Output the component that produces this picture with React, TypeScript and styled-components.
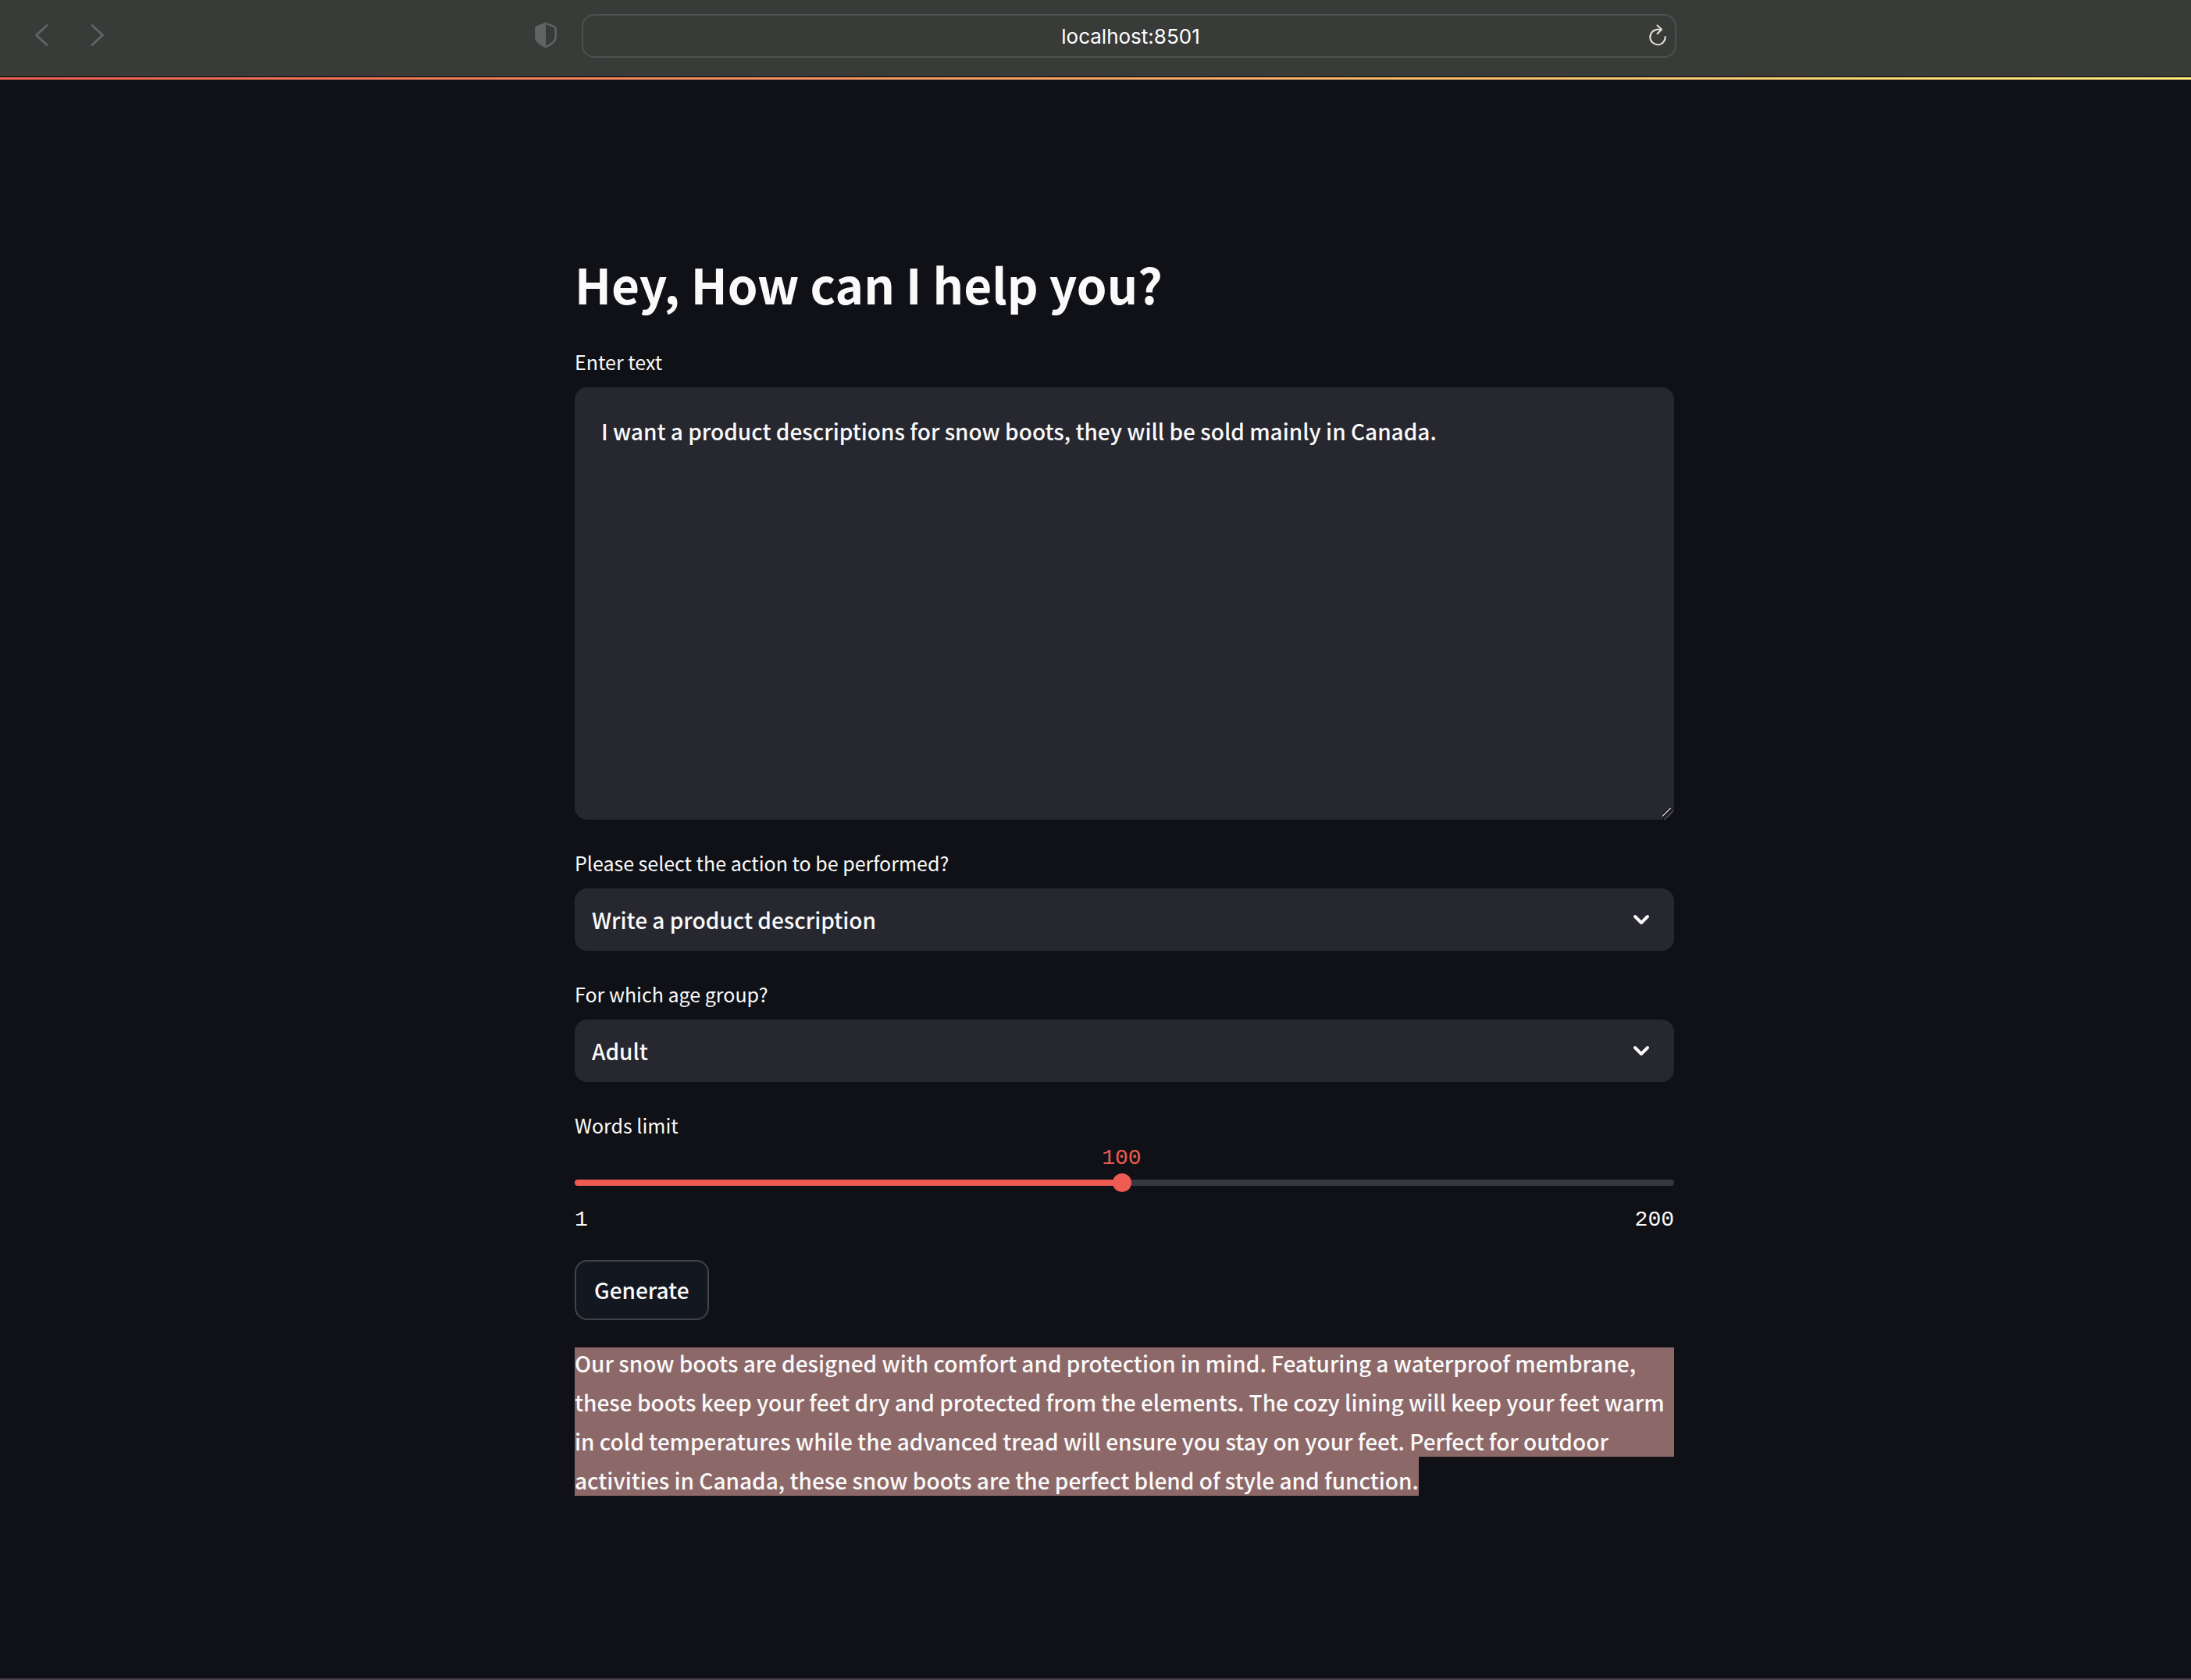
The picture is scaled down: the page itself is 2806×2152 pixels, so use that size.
import { useState } from "react";
import styled, { createGlobalStyle } from "styled-components";

const color = {
  page: "#101116",
  field: "#27272f",
  text: "#fafafa",
  accent: "#ed5b53",
  track: "#363841",
  chrome: "#393b39",
  chromeLine: "#4f5150",
  chromeIcon: "#626365",
  highlight: "#8d6868",
};

const sans = `"Noto Sans CJK SC", "Noto Sans", sans-serif`;
const mono = `"Liberation Mono", monospace`;

const GlobalStyle = createGlobalStyle`
  *, *::before, *::after { box-sizing: border-box; }
  body {
    margin: 0;
    background: ${color.page};
    color: ${color.text};
    font-family: ${sans};
    font-size: 28px;
    font-weight: 500;
  }
`;

const Page = styled.div`
  display: flex;
  flex-direction: column;
  min-height: 100vh;
  border-bottom: 2px solid #48414a;
`;

const Toolbar = styled.header`
  display: grid;
  grid-template-columns: 1fr minmax(0, 1402px) 1fr;
  align-items: center;
  height: 99px;
  padding: 0 0 6px 86px;
  background: ${color.chrome};
  border-bottom: 1px solid #000;
`;

const ToolbarStart = styled.div`
  display: flex;
  align-items: center;
  justify-content: space-between;
  margin-left: -51px;
  padding-right: 28px;
`;

const NavButtons = styled.nav`
  display: flex;
  gap: 36px;
`;

const IconButton = styled.button`
  display: flex;
  align-items: center;
  justify-content: center;
  width: 36px;
  height: 40px;
  padding: 0 0 2px;
  border: 0;
  background: none;
  color: ${color.chromeIcon};
`;

const AddressBar = styled.div`
  display: grid;
  grid-template-columns: 1fr 40px;
  align-items: center;
  height: 56px;
  padding-left: 44px;
  border: 2px solid ${color.chromeLine};
  border-radius: 16px;
`;

const AddressInput = styled.input`
  width: 100%;
  padding: 2px 0 0;
  border: 0;
  outline: 0;
  background: none;
  color: #fff;
  font: 400 26px/32px Inter, sans-serif;
  text-align: center;
`;

const ReloadButton = styled(IconButton)`
  color: #dededd;
`;

const Decoration = styled.div`
  height: 3px;
  background: linear-gradient(90deg, #ee6153, #ffec7c);
`;

const Main = styled.main`
  display: flex;
  justify-content: center;
  padding: 213px 0 96px 74px;
`;

const Form = styled.form`
  display: flex;
  flex-direction: column;
  align-items: stretch;
  flex: 0 1 1408px;
  min-width: 0;
`;

const Title = styled.h1`
  margin: 0 0 34px;
  font-size: 62px;
  font-weight: 700;
  line-height: 96px;
`;

const Field = styled.div`
  display: flex;
  flex-direction: column;
  margin-bottom: 37px;
`;

const Label = styled.label`
  margin-bottom: 15px;
  font-size: 25px;
  font-weight: 400;
  line-height: 36px;
`;

const TextArea = styled.textarea`
  display: block;
  width: 100%;
  height: 554px;
  padding: 32px 34px;
  border: 0;
  outline: 0;
  border-radius: 16px;
  background: ${color.field};
  color: ${color.text};
  font: 500 28px/48px ${sans};
  resize: vertical;

  &::-webkit-resizer {
    background: linear-gradient(
      135deg,
      transparent 24%,
      #101116 24% 31%,
      #c4c4c6 31% 38%,
      transparent 38% 48%,
      #101116 48% 55%,
      #77777c 55% 60%,
      transparent 60%
    );
  }
`;

const SelectShell = styled.div`
  display: grid;
  align-items: center;
  border-radius: 16px;
  background: ${color.field};

  > * { grid-area: 1 / 1; }
  > svg { justify-self: end; margin-right: 22px; pointer-events: none; }
`;

const Select = styled.select`
  appearance: none;
  width: 100%;
  height: 80px;
  padding: 0 22px;
  border: 0;
  outline: 0;
  border-radius: 16px;
  background: none;
  color: ${color.text};
  font: 500 28px/48px ${sans};
`;

const SliderValue = styled.output<{ $fill: number }>`
  align-self: flex-start;
  margin-left: ${(p) => p.$fill}%;
  transform: translateX(-50%);
  color: ${color.accent};
  font: 400 28px/20px ${mono};
`;

const Slider = styled.input<{ $fill: number }>`
  appearance: none;
  width: 100%;
  height: 24px;
  margin: 9px 0 22px;
  outline: 0;
  background: none;

  &::-webkit-slider-runnable-track {
    height: 8px;
    border-radius: 4px;
    background: linear-gradient(
      90deg,
      ${color.accent} ${(p) => p.$fill}%,
      ${color.track} ${(p) => p.$fill}%
    );
  }

  &::-webkit-slider-thumb {
    appearance: none;
    width: 24px;
    height: 24px;
    margin-top: -8px;
    border-radius: 50%;
    background: ${color.accent};
  }
`;

const SliderRange = styled.div`
  display: flex;
  justify-content: space-between;
  font: 400 28px/28px ${mono};
`;

const GenerateButton = styled.button`
  align-self: flex-start;
  height: 77px;
  padding: 0 23px 2px;
  border: 2px solid #434449;
  border-radius: 16px;
  background: #131720;
  color: ${color.text};
  font: 500 28px/48px ${sans};
`;

const Result = styled.p`
  margin: 35px 0 0;
  line-height: 40px;
`;

const ResultLine = styled.span`
  display: block;
  width: fit-content;
  padding-top: 10px;
  background: ${color.highlight};
  white-space: nowrap;

  &:first-child { padding-top: 0; }
  &:not(:last-child) { width: auto; }
`;

const resultLines = [
  "Our snow boots are designed with comfort and protection in mind. Featuring a waterproof membrane,",
  "these boots keep your feet dry and protected from the elements. The cozy lining will keep your feet warm",
  "in cold temperatures while the advanced tread will ensure you stay on your feet. Perfect for outdoor",
  "activities in Canada, these snow boots are the perfect blend of style and function.",
];

const Arrow = ({ forward = false }: { forward?: boolean }) => (
  <svg width="18" height="30" viewBox="0 0 18 30" fill="none" stroke="currentColor" strokeWidth="3" strokeLinecap="round" strokeLinejoin="round" aria-hidden="true">
    <path d={forward ? "M2 2.5 L15.500 15 L2 27.500" : "M16 2.5 L2.500 15 L16 27.500"} />
  </svg>
);

const Shield = () => (
  <svg width="28" height="34" viewBox="0 0 28 34" aria-hidden="true">
    <path d="M14 1.800 L25.200 6.300 Q26.700 7 26.700 8.500 V20 C26.700 25 21 28.500 14 32.300 C7 28.500 1.300 25 1.300 20 V8.500 Q1.300 7 2.800 6.300 Z" fill="none" stroke="currentColor" strokeWidth="2.400" strokeLinejoin="round" />
    <path d="M14 1.800 L2.800 6.300 Q1.300 7 1.300 8.500 V20 C1.300 25 7 28.500 14 32.300 Z" fill="currentColor" />
  </svg>
);

const Reload = () => (
  <svg width="22" height="28" viewBox="0 0 22 28" fill="none" stroke="currentColor" strokeWidth="2" strokeLinecap="round" strokeLinejoin="round" aria-hidden="true">
    <path d="M15.500 6.800 L11 6.800 A9.700 9.700 0 1 0 20.700 16" />
    <path d="M10.500 1.500 L16 6.800 L10.500 12.300" />
  </svg>
);

const Chevron = () => (
  <svg width="40" height="40" viewBox="0 0 40 40" fill="none" stroke={color.text} strokeWidth="4" strokeLinecap="round" strokeLinejoin="round" aria-hidden="true">
    <path d="M12 16 L20 24 L28 16" />
  </svg>
);

type SelectFieldProps = { id: string; label: string; options: string[] };

const SelectField = ({ id, label, options }: SelectFieldProps) => (
  <Field>
    <Label htmlFor={id}>{label}</Label>
    <SelectShell>
      <Select id={id}>
        {options.map((option) => (
          <option key={option}>{option}</option>
        ))}
      </Select>
      <Chevron />
    </SelectShell>
  </Field>
);

export default function App() {
  const min = 1;
  const max = 200;
  const [limit, setLimit] = useState(100);
  const fill = ((limit - min) / (max - min)) * 100;

  return (
    <>
      <GlobalStyle />
      <Page>
        <Toolbar>
          <ToolbarStart>
            <NavButtons>
              <IconButton type="button" aria-label="Back"><Arrow /></IconButton>
              <IconButton type="button" aria-label="Forward"><Arrow forward /></IconButton>
            </NavButtons>
            <IconButton type="button" aria-label="Privacy report"><Shield /></IconButton>
          </ToolbarStart>
          <AddressBar>
            <AddressInput aria-label="Address" defaultValue="localhost:8501" />
            <ReloadButton type="button" aria-label="Reload"><Reload /></ReloadButton>
          </AddressBar>
        </Toolbar>
        <Decoration />
        <Main>
          <Form onSubmit={(event) => event.preventDefault()}>
            <Title>Hey, How can I help you?</Title>
            <Field>
              <Label htmlFor="prompt">Enter text</Label>
              <TextArea
                id="prompt"
                spellCheck={false}
                defaultValue="I want a product descriptions for snow boots, they will be sold mainly in Canada."
              />
            </Field>
            <SelectField id="action" label="Please select the action to be performed?" options={["Write a product description"]} />
            <SelectField id="age" label="For which age group?" options={["Adult"]} />
            <Field>
              <Label htmlFor="limit">Words limit</Label>
              <SliderValue htmlFor="limit" $fill={fill}>{limit}</SliderValue>
              <Slider
                id="limit"
                type="range"
                min={min}
                max={max}
                value={limit}
                $fill={fill}
                onChange={(event) => setLimit(Number(event.target.value))}
              />
              <SliderRange>
                <span>{min}</span>
                <span>{max}</span>
              </SliderRange>
            </Field>
            <GenerateButton type="submit">Generate</GenerateButton>
            <Result>
              {resultLines.map((line) => (
                <ResultLine key={line}>{line} </ResultLine>
              ))}
            </Result>
          </Form>
        </Main>
      </Page>
    </>
  );
}
